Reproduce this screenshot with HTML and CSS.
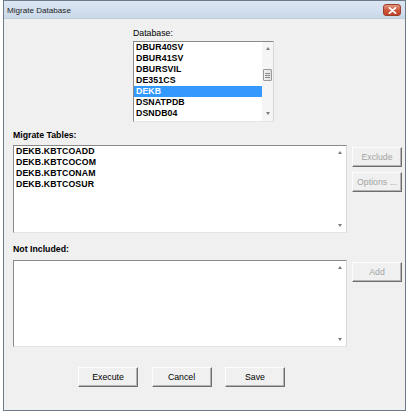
FILE: index.html
```html
<!DOCTYPE html>
<html>
<head>
<meta charset="utf-8">
<link rel="stylesheet" href="styles.css">
</head>
<body>
<div class="window">
  <div class="titlebar">
    <span class="title">Migrate Database</span>
    <span class="close"><svg width="9" height="7" viewBox="0 0 9 7"><path d="M1.5 0.8 L7.5 6.2 M7.5 0.8 L1.5 6.2" stroke="#fff" stroke-width="1.8" stroke-linecap="round"/></svg></span>
  </div>
  <div class="content">
    <div class="db">
      <div class="label">Database:</div>
      <div class="listbox dblist">
        <ul class="items">
          <li>DBUR40SV</li>
          <li>DBUR41SV</li>
          <li>DBURSVIL</li>
          <li>DE351CS</li>
          <li class="sel">DEKB</li>
          <li>DSNATPDB</li>
          <li>DSNDB04</li>
        </ul>
        <div class="vscroll track">
          <span class="arr up"></span>
          <span class="thumb"><i></i><i></i><i></i></span>
          <span class="fill"></span>
          <span class="arr down"></span>
        </div>
      </div>
    </div>

    <div class="label bold sec1">Migrate Tables:</div>
    <div class="row r1">
      <div class="listbox big b1">
        <ul class="items">
          <li>DEKB.KBTCOADD</li>
          <li>DEKB.KBTCOCOM</li>
          <li>DEKB.KBTCONAM</li>
          <li>DEKB.KBTCOSUR</li>
        </ul>
        <div class="vscroll">
          <span class="arr up"></span>
          <span class="fill"></span>
          <span class="arr down"></span>
        </div>
      </div>
      <div class="side">
        <button class="btn dis first">Exclude</button>
        <button class="btn dis second">Options ...</button>
      </div>
    </div>

    <div class="label bold sec2">Not Included:</div>
    <div class="row r2">
      <div class="listbox big b2">
        <ul class="items"></ul>
        <div class="vscroll">
          <span class="arr up"></span>
          <span class="fill"></span>
          <span class="arr down"></span>
        </div>
      </div>
      <div class="side">
        <button class="btn dis first">Add</button>
      </div>
    </div>

    <div class="actions">
      <button class="btn">Execute</button>
      <button class="btn">Cancel</button>
      <button class="btn">Save</button>
    </div>
  </div>
</div>
</body>
</html>
```

FILE: styles.css
```css
html, body {
  margin: 0;
  padding: 0;
  background: #ffffff;
}
body {
  font-family: "Liberation Sans", Arial, sans-serif;
  font-size: 8.75px;
  color: #000;
}
.window {
  margin-left: 3px;
  width: 403px;
  height: 411px;
  box-sizing: border-box;
  border: 1px solid #6c7a8a;
  background: #f0f0f0;
  display: flex;
  flex-direction: column;
}
.titlebar {
  height: 18px;
  background: linear-gradient(#dde7f3, #cad8e9);
  display: flex;
  align-items: center;
  justify-content: space-between;
  padding-left: 3px;
  padding-right: 4px;
  border-bottom: 1px solid #c0cddd;
  box-sizing: border-box;
}
.title {
  font-family: "Liberation Sans", Arial, sans-serif;
  font-size: 8.1px;
  color: #1e1e1e;
  padding-top: 1px;
}
.close {
  width: 18px;
  height: 12px;
  box-sizing: border-box;
  border: 1px solid #9a3f2e;
  border-radius: 3px;
  background: linear-gradient(#e4967f, #cc5438 55%, #c14529);
  display: flex;
  align-items: center;
  justify-content: center;
  margin-top: 1px;
}
.close svg { display: block; }
.content {
  flex: 1;
  padding: 0 3px 0 9px;
  display: flex;
  flex-direction: column;
}
.label {
  line-height: 11px;
  height: 11px;
  white-space: nowrap;
}
.bold { font-weight: bold; }
.db {
  margin-left: 120px;
  width: 141px;
  padding-top: 9px;
}
.listbox {
  background: #fff;
  box-sizing: border-box;
  border-top: 1px solid #8a8a8a;
  border-left: 1px solid #8a8a8a;
  border-right: 1px solid #d8d8d8;
  border-bottom: 1px solid #e4e4e4;
  display: flex;
  overflow: hidden;
}
.dblist {
  margin-top: 2px;
  height: 81px;
}
.items {
  list-style: none;
  margin: 0;
  padding: 0;
  flex: 1;
  font-weight: bold;
  letter-spacing: 0.1px;
}
.items li {
  height: 11px;
  line-height: 11px;
  padding-left: 2px;
  white-space: nowrap;
}
.items li.sel {
  background: #3399ff;
  color: #fff;
}
.vscroll {
  width: 11px;
  display: flex;
  flex-direction: column;
  align-items: center;
  padding: 5px 0 5px 0;
  box-sizing: border-box;
}
.track { background: #f5f5f5; }
.fill { flex: 1; }
.arr {
  width: 0;
  height: 0;
  border-left: 2.5px solid transparent;
  border-right: 2.5px solid transparent;
}
.arr.up { border-bottom: 3px solid #7d7d7d; }
.arr.down { border-top: 3px solid #7d7d7d; }
.thumb {
  margin-top: 19px;
  width: 9px;
  height: 12px;
  box-sizing: border-box;
  border: 1px solid #9a9a9a;
  border-radius: 1px;
  background: linear-gradient(90deg, #f2f2f2, #e0e0e0);
  display: flex;
  flex-direction: column;
  justify-content: center;
  align-items: center;
  gap: 1px;
}
.thumb i {
  display: block;
  width: 5px;
  height: 1px;
  background: #8c8c8c;
}
.dblist .vscroll { padding-bottom: 6px; }
.sec1 { margin-top: 8px; }
.sec2 { margin-top: 11px; }
.row {
  display: flex;
  gap: 5px;
}
.r1 { margin-top: 4px; }
.r2 { margin-top: 5px; }
.big { flex: 1; }
.b1 { height: 88px; }
.b2 { height: 87px; }
.big .vscroll { width: 12px; padding: 5px 0 5px 0; }
.side {
  width: 50px;
  display: flex;
  flex-direction: column;
}
.btn {
  font-family: "Liberation Sans", Arial, sans-serif;
  font-size: 8.75px;
  color: #000;
  height: 20px;
  padding: 0;
  margin: 0;
  box-sizing: border-box;
  background: #f0f0f0;
  border-top: 1px solid #fdfdfd;
  border-left: 1px solid #fdfdfd;
  border-right: 1px solid #6e6e6e;
  border-bottom: 1px solid #6e6e6e;
  box-shadow: inset -1px -1px 0 #b4b4b4;
  white-space: nowrap;
}
.btn.dis { color: #a3a3a3; }
.side .first { margin-top: 2px; }
.side .second { margin-top: 5px; }
.actions {
  margin-top: 20px;
  padding-left: 65px;
  display: flex;
  gap: 13.5px;
}
.actions .btn { width: 60px; }
```
